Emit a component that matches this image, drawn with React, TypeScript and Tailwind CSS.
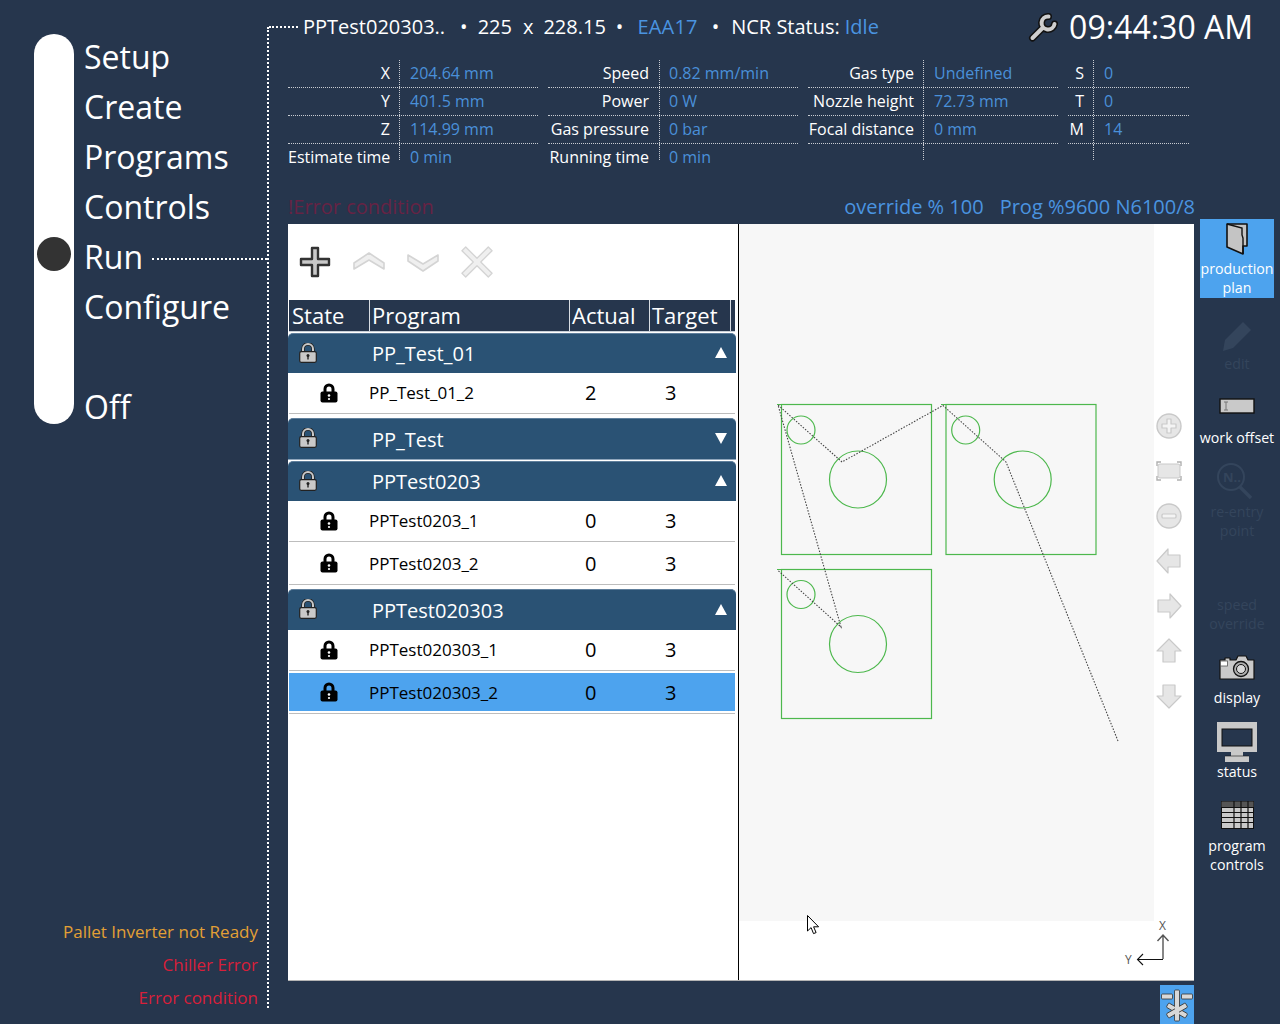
import type { ReactNode } from "react";

const NAV_TOP = ["Setup", "Create", "Programs", "Controls"];

const DATA_GROUPS = [
	{
		width: "w-[250px]",
		labelWidth: "w-[111px] pr-[9px]",
		valuePad: "pl-[10px]",
		rows: [
			["X", "204.64 mm"],
			["Y", "401.5 mm"],
			["Z", "114.99 mm"],
			["Estimate time", "0 min"],
		],
	},
	{
		width: "w-[250px]",
		labelWidth: "w-[111px] pr-[10px]",
		valuePad: "pl-[9px]",
		rows: [
			["Speed", "0.82 mm/min"],
			["Power", "0 W"],
			["Gas pressure", "0 bar"],
			["Running time", "0 min"],
		],
	},
	{
		width: "w-[250px]",
		labelWidth: "w-[115px] pr-[9px]",
		valuePad: "pl-[10px]",
		rows: [
			["Gas type", "Undefined"],
			["Nozzle height", "72.73 mm"],
			["Focal distance", "0 mm"],
			["", ""],
		],
	},
	{
		width: "w-[121px]",
		labelWidth: "w-[25px] pr-[9px]",
		valuePad: "pl-[10px]",
		rows: [
			["S", "0"],
			["T", "0"],
			["M", "14"],
			["", ""],
		],
	},
];

const PROGRAM_GROUPS = [
	{
		name: "PP_Test_01",
		open: true,
		box: "mt-px h-[40px]",
		label: "",
		rows: [{ name: "PP_Test_01_2", actual: 2, target: 3, tall: false, selected: false }],
	},
	{
		name: "PP_Test",
		open: false,
		box: "mt-[4px] h-[42px] border-b border-b-[#8fa6bc]",
		label: "mt-[2px]",
		rows: [],
	},
	{
		name: "PPTest0203",
		open: true,
		box: "mt-px h-[40px]",
		label: "",
		rows: [
			{ name: "PPTest0203_1", actual: 0, target: 3, tall: false, selected: false },
			{ name: "PPTest0203_2", actual: 0, target: 3, tall: true, selected: false },
		],
	},
	{
		name: "PPTest020303",
		open: true,
		box: "mt-[4px] h-[41px]",
		label: "mt-[2px]",
		rows: [
			{ name: "PPTest020303_1", actual: 0, target: 3, tall: false, selected: false },
			{ name: "PPTest020303_2", actual: 0, target: 3, tall: true, selected: true },
		],
	},
];

function Lock({ dark }: { dark?: boolean }) {
	if (dark) {
		return (
			<svg width="18" height="20" viewBox="0 0 18 20" className="shrink-0">
				<path d="M5 9V6a4 4 0 0 1 8 0v3" fill="none" stroke="#000" strokeWidth="3" />
				<rect x="0.5" y="8.5" width="17" height="11" rx="2" fill="#000" />
				<circle cx="9" cy="12.5" r="1.3" fill="#fff" />
				<circle cx="9" cy="16" r="1.1" fill="#fff" />
			</svg>
		);
	}
	return (
		<svg width="18" height="20" viewBox="0 0 18 20" className="shrink-0">
			<path d="M4 9V6a5 5 0 0 1 10 0v3" fill="none" stroke="#222" strokeWidth="3.6" />
			<path d="M4 9V6a5 5 0 0 1 10 0v3" fill="none" stroke="#c9c9c9" strokeWidth="2" />
			<rect x="0.7" y="8.7" width="16.6" height="10.6" rx="1.5" fill="#c9c9c9" stroke="#222" strokeWidth="1.2" />
			<circle cx="9" cy="12.5" r="1.5" fill="#222" />
			<rect x="8.3" y="13" width="1.4" height="3.5" fill="#222" />
		</svg>
	);
}

function Triangle({ up }: { up: boolean }) {
	return (
		<svg width="12" height="12" viewBox="0 0 12 12" className="ml-auto mr-[9px] mb-px">
			<polygon points={up ? "6,0 12,11 0,11" : "0,0 12,0 6,11"} fill="#fff" />
		</svg>
	);
}

function SideButton({
	lines,
	icon,
	height,
	disabled,
	active,
}: {
	lines: string[];
	icon?: ReactNode;
	height: string;
	disabled?: boolean;
	active?: boolean;
}) {
	return (
		<div
			className={`${height} flex flex-col items-center justify-end pb-px ${active ? "bg-[#4da3ee]" : ""} ${disabled ? "text-[#34455c]" : "text-white"}`}
		>
			{icon}
			{lines.map((l) => (
				<span key={l} className="text-[14.2px] leading-[19px] whitespace-nowrap">
					{l}
				</span>
			))}
		</div>
	);
}

function ZoomTools() {
	const fill = "#e6e6e6";
	const line = "#c9c9c9";
	return (
		<div className="w-[40px] bg-white flex flex-col items-center gap-[19px] pt-[189px] pr-[10px]">
			<svg width="26" height="26" viewBox="0 0 26 26" className="shrink-0">
				<circle cx="13" cy="13" r="12" fill={fill} stroke={line} strokeWidth="1.4" />
				<path d="M11 6h4v5h5v4h-5v5h-4v-5H6v-4h5z" fill="#f4f4f4" stroke={line} strokeWidth="1.2" strokeLinejoin="round" />
			</svg>
			<svg width="26" height="26" viewBox="0 0 26 26" className="shrink-0">
				<rect x="2" y="6" width="22" height="14" rx="2" fill={fill} stroke={line} />
				<path d="M1 8V4h4M21 4h4v4M1 18v4h4M25 18v4h-4" fill="none" stroke="#b0b0b0" strokeWidth="1.4" />
			</svg>
			<svg width="26" height="26" viewBox="0 0 26 26" className="shrink-0">
				<circle cx="13" cy="13" r="12" fill={fill} stroke={line} strokeWidth="1.4" />
				<rect x="6" y="11" width="14" height="4" rx="1" fill="#f4f4f4" stroke={line} strokeWidth="1.2" />
			</svg>
			<svg width="26" height="26" viewBox="0 0 26 26" className="shrink-0">
				<polygon points="1,13 12,1 12,7 24,7 24,19 12,19 12,25" fill={fill} stroke={line} strokeWidth="1.2" strokeLinejoin="round" />
			</svg>
			<svg width="26" height="26" viewBox="0 0 26 26" className="shrink-0">
				<polygon points="25,13 14,1 14,7 2,7 2,19 14,19 14,25" fill={fill} stroke={line} strokeWidth="1.2" strokeLinejoin="round" />
			</svg>
			<svg width="26" height="26" viewBox="0 0 26 26" className="shrink-0">
				<polygon points="13,1 25,13 19,13 19,24 7,24 7,13 1,13" fill={fill} stroke={line} strokeWidth="1.2" strokeLinejoin="round" />
			</svg>
			<svg width="26" height="26" viewBox="0 0 26 26" className="shrink-0">
				<polygon points="13,25 25,13 19,13 19,2 7,2 7,13 1,13" fill={fill} stroke={line} strokeWidth="1.2" strokeLinejoin="round" />
			</svg>
		</div>
	);
}

function PartDrawing() {
	return (
		<svg viewBox="739 224 415 697" className="w-[415px] h-[697px] block">
			<g fill="none" stroke="#4db84d" strokeWidth="1.2">
				<rect x="781.5" y="404.5" width="150" height="150" />
				<rect x="946" y="404.5" width="150" height="150" />
				<rect x="781.5" y="569.5" width="150" height="149" />
				<circle cx="801" cy="430" r="14" />
				<circle cx="858" cy="479.5" r="28.5" />
				<circle cx="965.7" cy="430" r="14" />
				<circle cx="1022.7" cy="479.5" r="28.5" />
				<circle cx="801" cy="594.5" r="14" />
				<circle cx="858" cy="644" r="28.5" />
			</g>
			<path
				d="M1118 741L1006 462L943 405.5L842 462L778 405L841 627L778 570.5"
				fill="none"
				stroke="#444"
				strokeWidth="1.1"
				strokeDasharray="1.5 1.5"
			/>
			<path d="M777 404.5h4.500M777 569.500h4.500M941 404.500h5" stroke="#4db84d" strokeWidth="1" fill="none" />
		</svg>
	);
}

export default function App() {
	return (
		<div className="w-[1280px] h-[1024px] flex overflow-hidden bg-[#26364d] text-white font-['Open_Sans',sans-serif]">
			{/* Left nav */}
			<div className="w-[267px] h-full flex flex-col justify-between pb-[10px]">
				<div className="flex">
					<div className="ml-[34px] mt-[34px] w-[40px] h-[390px] rounded-full bg-white pt-[203px] pl-[3px]">
						<div className="w-[34px] h-[34px] rounded-full bg-[#333333]" />
					</div>
					<div className="flex-1 ml-[10px] mt-[32px] text-[32px]">
						{NAV_TOP.map((n) => (
							<div key={n} className="h-[50px] leading-[49px]">
								{n}
							</div>
						))}
						<div className="h-[50px] leading-[49px] flex">
							<span>Run</span>
							<span className="flex-1 ml-[9px] mt-[26px] border-t-2 border-dotted border-white" />
						</div>
						<div className="h-[50px] leading-[49px]">Configure</div>
						<div className="h-[50px] leading-[49px] mt-[50px]">Off</div>
					</div>
				</div>
				<div className="pr-[9px] text-right text-[17px]">
					<div className="h-[33px] leading-[33px] text-[#e3a035]">Pallet Inverter not Ready</div>
					<div className="h-[33px] leading-[33px] text-[#d81f3a]">Chiller Error</div>
					<div className="h-[33px] leading-[33px] text-[#d81f3a]">Error condition</div>
				</div>
			</div>

			{/* Vertical dotted rule */}
			<div className="mt-[27px] h-[981px] border-l-2 border-dotted border-white" />

			<div className="w-[1011px] flex flex-col">
				{/* Header */}
				<div className="h-[54px] flex items-center text-[20px] whitespace-nowrap">
					<span className="w-[29px] border-t-2 border-dotted border-white" />
					<span className="ml-[5px]">PPTest020303..</span>
					<span className="ml-[15px]">•</span>
					<span className="ml-[10px]">225</span>
					<span className="ml-[11px]">x</span>
					<span className="ml-[10px]">228.15</span>
					<span className="ml-[10px]">•</span>
					<span className="ml-[14px] text-[#4a94e0] tracking-[0.2px]">EAA17</span>
					<span className="ml-[14px]">•</span>
					<span className="ml-[12px]">NCR Status:</span>
					<span className="ml-[5px] text-[#4a94e0]">Idle</span>
					<svg width="31" height="30" viewBox="1 0 30 30" className="ml-auto mr-[10px] mt-[1px]">
						<g fill="none" strokeLinecap="round">
							<path d="M21 3.500A6.500 6.500 0 1 0 27 11M15.500 14.500L5 25" stroke="#111" strokeWidth="7" />
							<path d="M21 3.500A6.500 6.500 0 1 0 27 11M15.500 14.500L5 25" stroke="#cfcfcf" strokeWidth="4" />
						</g>
					</svg>
					<span className="mr-[27px] text-[32px] leading-none">09:44:30 AM</span>
				</div>

				{/* Machine data */}
				<div className="mt-[6px] ml-[19px] flex gap-[10px] text-[16px]">
					{DATA_GROUPS.map((g, gi) => (
						<div key={gi} className={g.width}>
							{g.rows.map(([label, value], i) => (
								<div
									key={i}
									className={`flex ${i < 3 ? "h-[28px] border-b border-dotted border-[#c8ccd2]" : "h-[16px]"}`}
								>
									<div className={`${g.labelWidth} shrink-0 text-right leading-[26px] whitespace-nowrap`}>
										{label}
									</div>
									<div
										className={`flex-1 border-l border-dotted border-[#c8ccd2] ${g.valuePad} leading-[26px] text-[#4a90d9] whitespace-nowrap`}
									>
										{value}
									</div>
								</div>
							))}
						</div>
					))}
				</div>

				{/* Status line */}
				<div className="mt-[32px] ml-[19px] w-[907px] h-[27px] flex justify-between text-[20px] leading-[30px]">
					<span className="text-[#662344]">!Error condition</span>
					<span className="text-[#4a94e0] flex gap-[16px]">
						<span>override % 100</span>
						<span>Prog %9600 N6100/8</span>
					</span>
				</div>

				{/* Work area */}
				<div className="flex">
					<div className="ml-[19px] w-[906px] mt-[5px] flex flex-col">
						<div className="h-[757px] flex border-b border-[#b5b5b5] bg-white">
							{/* Program list */}
							<div className="w-[451px] border-r border-black text-black">
								<div className="h-[76px] flex items-center pl-[11px] gap-[22px]">
									<svg width="32" height="32" viewBox="0 0 32 32">
										<path
											d="M13 2h6v11h11v6H19v11h-6V19H2v-6h11z"
											fill="#c9c9c9"
											stroke="#333"
											strokeWidth="2.400"
											strokeLinejoin="round"
										/>
									</svg>
									<svg width="32" height="22" viewBox="0 0 32 22">
										<path
											d="M16 2L31 12v6L16 9 1 18v-6z"
											fill="#efefef"
											stroke="#d4d4d4"
											strokeWidth="1.600"
											strokeLinejoin="round"
										/>
									</svg>
									<svg width="32" height="22" viewBox="0 0 32 22">
										<path
											d="M1 4l15 9 15-9v6L16 20 1 10z"
											fill="#efefef"
											stroke="#d4d4d4"
											strokeWidth="1.600"
											strokeLinejoin="round"
										/>
									</svg>
									<svg width="32" height="34" viewBox="0 0 34 34">
										<path
											d="M5 1l12 12L29 1l4 4-12 12 12 12-4 4-12-12L5 33l-4-4 12-12L1 5z"
											fill="#efefef"
											stroke="#d4d4d4"
											strokeWidth="1.400"
											strokeLinejoin="round"
										/>
									</svg>
								</div>

								{/* Table head */}
								<div className="ml-px w-[446px] h-[32px] flex bg-[#26364d] border-b border-[#c8d0d8] text-white text-[22px] leading-[31px]">
									<div className="w-[81px] pl-[3px] border-r border-[#d8dde3]">State</div>
									<div className="w-[200px] pl-[2px] border-r border-[#d8dde3]">Program</div>
									<div className="w-[80px] pl-[2px] border-r border-[#d8dde3]">Actual</div>
									<div className="w-[81px] pl-[2px] border-r border-[#d8dde3]">Target</div>
								</div>

								{PROGRAM_GROUPS.map((g) => (
									<div key={g.name}>
										<div
											className={`${g.box} w-[448px] flex items-center pl-[11px] rounded-t-[5px] bg-[#2a5274] border-t border-t-[#5f7f9c] text-white text-[20px]`}
										>
											<span className="mb-[2px]">
												<Lock />
											</span>
											<span className={`ml-[55px] ${g.label}`}>{g.name}</span>
											<Triangle up={g.open} />
										</div>
										{g.rows.map((r) => (
											<div
												key={r.name}
												className={`ml-px w-[446px] ${r.tall ? "h-[43px]" : "h-[41px]"} flex flex-col justify-center border-b border-[#bdbdbd]`}
											>
												<div
													className={`flex items-center ${r.selected ? "h-[38px] bg-[#4da3ee]" : "h-full"}`}
												>
													<div className="w-[80px] pl-[31px]">
														<Lock dark />
													</div>
													<div className={`w-[200px] text-[17px] ${r.tall ? "pt-[2px]" : ""}`}>{r.name}</div>
													<div className={`w-[80px] pl-[16px] text-[20px] ${r.tall ? "pt-[2px]" : ""}`}>{r.actual}</div>
													<div className={`pl-[16px] text-[20px] ${r.tall ? "pt-[2px]" : ""}`}>{r.target}</div>
												</div>
											</div>
										))}
									</div>
								))}
							</div>

							{/* Preview */}
							<div className="flex-1 flex flex-col relative">
								<div className="flex h-[697px]">
									<div className="w-[415px] bg-[#f7f7f7]">
										<PartDrawing />
									</div>
									<ZoomTools />
								</div>
								<div className="flex-1 bg-white" />
								<svg
									viewBox="1100 901 94 80"
									className="absolute right-0 bottom-0 w-[94px] h-[80px]"
								>
									<text x="1159" y="931" fontSize="12" fill="#555">
										X
									</text>
									<text x="1125" y="965" fontSize="12" fill="#555">
										Y
									</text>
									<path d="M1163 960V936M1157.500 942l5.500-6 5.500 6" fill="none" stroke="#555" strokeWidth="1.400" />
									<path d="M1163 960.500H1138M1143 955l-5.500 5.500 5.500 5.500" fill="none" stroke="#111" strokeWidth="1.100" />
								</svg>
								<svg
									width="13"
									height="20"
									viewBox="0 0 13 20"
									className="absolute left-[68px] top-[691px]"
								>
									<path
										d="M0.5 0.5V16l3.600-3.400 2.400 6 2.600-1-2.500-5.800h5z"
										fill="#fff"
										stroke="#000"
										strokeWidth="1"
									/>
								</svg>
							</div>
						</div>

						{/* Chiller button */}
						<div className="self-end mt-[4px] w-[34px] h-[39px] bg-[#4da3ee] flex items-center justify-center">
							<svg width="34" height="36" viewBox="0 0 34 36">
								<g fill="#d8d8d8" stroke="#333" strokeWidth="0.8">
									<rect x="1.500" y="7" width="11" height="5" rx="1" />
									<rect x="21.500" y="7" width="11" height="5" rx="1" />
									<rect x="14.500" y="3" width="5" height="31" rx="1" />
									<rect x="6" y="21" width="22" height="5" rx="1" transform="rotate(30 17 23.500)" />
									<rect x="6" y="21" width="22" height="5" rx="1" transform="rotate(-30 17 23.500)" />
								</g>
								<rect x="15" y="16" width="4" height="17" fill="#d8d8d8" />
							</svg>
						</div>
					</div>

					{/* Side buttons */}
					<div className="ml-[6px] w-[74px] flex flex-col">
						<SideButton
							height="h-[79px]"
							active
							lines={["production", "plan"]}
							icon={
								<svg width="24" height="34" viewBox="0 0 24 34" className="mb-[3px]">
									<path d="M2 2h20v22h-4v8L2 25z" fill="#c4c4c4" stroke="#111" strokeWidth="1.600" strokeLinejoin="round" />
									<path d="M2 2l15 4v7l1 3v16" fill="none" stroke="#111" strokeWidth="1.400" />
								</svg>
							}
						/>
						<SideButton
							height="h-[76px]"
							disabled
							lines={["edit"]}
							icon={
								<svg width="34" height="36" viewBox="0 0 34 36">
									<path d="M3 33l2-11L23 4l8 8-18 18z" fill="#34455c" />
								</svg>
							}
						/>
						<SideButton
							height="h-[74px]"
							lines={["work offset"]}
							icon={
								<svg width="36" height="16" viewBox="0 0 36 16" className="mb-[14px]">
									<rect x="1" y="1" width="34" height="14" fill="#c9c9c9" stroke="#111" strokeWidth="1.400" />
									<path d="M5 4h4M7 4v8M5 12h4" stroke="#777" fill="none" />
								</svg>
							}
						/>
						<SideButton
							height="h-[93px]"
							disabled
							lines={["re-entry", "point"]}
							icon={
								<svg width="38" height="38" viewBox="0 0 38 38" className="mb-[2px] mr-[4px]">
									<circle cx="15" cy="15" r="13" fill="none" stroke="#34455c" strokeWidth="2" />
									<path d="M24 25l11 11" stroke="#34455c" strokeWidth="3.500" />
									<text x="7" y="20" fontSize="13" fontWeight="700" fill="#34455c">
										N..
									</text>
								</svg>
							}
						/>
						<SideButton height="h-[93px]" disabled lines={["speed", "override"]} />
						<SideButton
							height="h-[74px]"
							lines={["display"]}
							icon={
								<svg width="36" height="26" viewBox="0 0 36 26" className="mb-[8px]">
									<path d="M1 6h5V4h5v2h6l2-4h8l2 4h6v19H1z" fill="#c9c9c9" stroke="#111" strokeWidth="1.200" strokeLinejoin="round" />
									<rect x="1.500" y="7" width="7" height="5" fill="#fff" stroke="#555" strokeWidth="0.8" />
									<circle cx="22" cy="15" r="7.500" fill="#b0b0b0" stroke="#111" strokeWidth="1.300" />
									<circle cx="22" cy="15" r="4.500" fill="#d8d8d8" stroke="#111" strokeWidth="1" />
								</svg>
							}
						/>
						<SideButton
							height="h-[74px]"
							lines={["status"]}
							icon={
								<svg width="40" height="40" viewBox="0 0 40 40">
									<path d="M0 0h40v30H26v4h6v6H8v-6h6v-4H0z" fill="#c9c9c9" />
									<rect x="5" y="7" width="30" height="17" fill="#26364d" stroke="#111" strokeWidth="1" />
									<path d="M8 34h24" stroke="#111" strokeWidth="0.6" />
								</svg>
							}
						/>
						<SideButton
							height="h-[93px]"
							lines={["program", "controls"]}
							icon={
								<svg width="33" height="28" viewBox="0 0 33 28" className="mb-[7px]">
									<rect x="0.5" y="0.5" width="32" height="27" fill="#c9c9c9" stroke="#111" />
									<rect x="0.5" y="0.5" width="32" height="6" fill="#555" />
									<path
										d="M13 0v28M20 0v28M27 0v28M0 6.500h33M0 11.500h33M0 16.500h33M0 21.500h33"
										stroke="#111"
										strokeWidth="1.200"
										fill="none"
									/>
								</svg>
							}
						/>
					</div>
				</div>
			</div>
		</div>
	);
}
